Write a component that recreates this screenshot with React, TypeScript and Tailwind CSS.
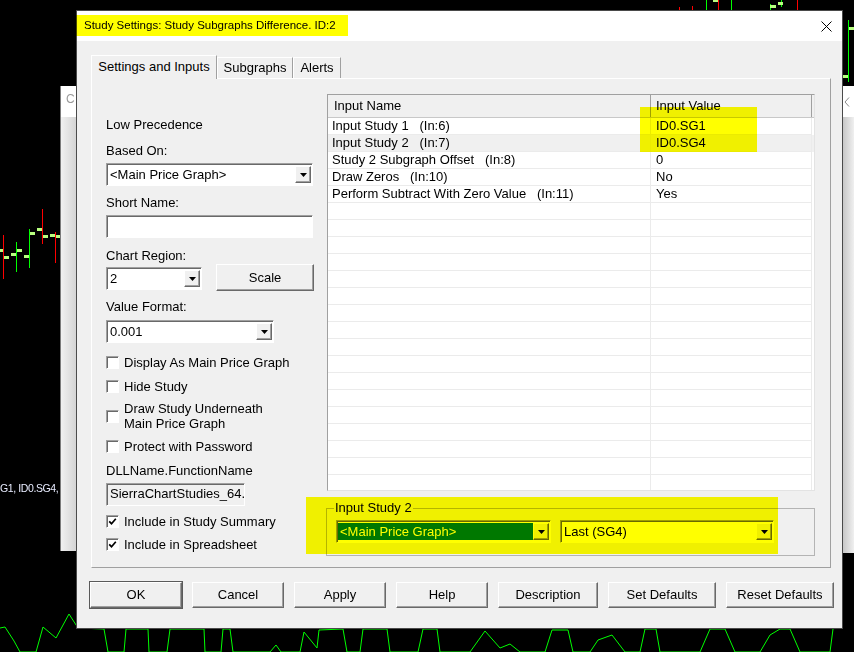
import React from 'react';

const inputs: [string, string][] = [
  ['Input Study 1   (In:6)', 'ID0.SG1'],
  ['Input Study 2   (In:7)', 'ID0.SG4'],
  ['Study 2 Subgraph Offset   (In:8)', '0'],
  ['Draw Zeros   (In:10)', 'No'],
  ['Perform Subtract With Zero Value   (In:11)', 'Yes'],
];

const emptyRows = Array.from({ length: 18 });

const raised =
  'border border-t-white border-l-white border-b-[#696969] border-r-[#696969] bg-[#f0f0f0] shadow-[inset_-1px_-1px_0_#a0a0a0]';
const sunken =
  'border border-t-[#a0a0a0] border-l-[#a0a0a0] border-b-white border-r-white shadow-[inset_1px_1px_0_#696969]';

function DropBtn() {
  return (
    <div className={`flex w-[16px] shrink-0 items-center justify-center ${raised}`}>
      <svg width="7" height="4" viewBox="0 0 7 4">
        <path d="M0 0h7L3.5 4z" fill="#000" />
      </svg>
    </div>
  );
}

function Combo({ value, className = '', selected = false }: { value: string; className?: string; selected?: boolean }) {
  return (
    <div className={`flex h-[23px] bg-white py-[2px] pr-[1px] ${sunken} ${className}`}>
      <div className="flex flex-1 items-stretch pl-[1px]">
        <div
          className={`flex-1 truncate pl-[2px] leading-[17px] ${selected ? 'bg-[#0078d7] text-white' : ''}`}
        >
          {value}
        </div>
      </div>
      <DropBtn />
    </div>
  );
}

function Check({ label, checked = false, className = '' }: { label: React.ReactNode; checked?: boolean; className?: string }) {
  return (
    <div className={`flex items-center gap-[5px] ${className}`}>
      <div className={`flex h-[13px] w-[13px] shrink-0 items-center justify-center bg-white ${sunken}`}>
        {checked && (
          <svg width="9" height="9" viewBox="0 0 9 9">
            <path d="M1.2 4.4 L3.5 6.7 L7.8 1.8" stroke="#000" strokeWidth="1.7" fill="none" />
          </svg>
        )}
      </div>
      <div className="leading-[15px]">{label}</div>
    </div>
  );
}

function Btn({ label, w, isDefault = false }: { label: string; w: string; isDefault?: boolean }) {
  return (
    <div
      className={`flex h-[26px] items-center justify-center ${w} ${raised} ${
        isDefault ? 'outline outline-1 outline-[#5a5a5a]' : ''
      }`}
    >
      {label}
    </div>
  );
}

function ChartBackground() {
  const bars: [number, number, number, string, number, number][] = [
    // x, top, bottom, colour, left tick y, right tick y
    [3, 235, 279, '#ff0000', 250, 257],
    [16, 242, 272, '#00ff00', 254, 250],
    [29, 229, 268, '#00ff00', 256, 233],
    [42, 209, 244, '#ff0000', 229, 236],
    [55, 232, 263, '#ff0000', 235, 236],
  ];
  const top: [number, number, number, string][] = [
    [679, 7, 10, '#ff0000'],
    [692, 6, 10, '#ff0000'],
    [706, 0, 10, '#00ff00'],
    [718, 0, 10, '#ff0000'],
    [731, 0, 10, '#00ff00'],
    [770, 4, 10, '#00ff00'],
    [781, 0, 7, '#00ff00'],
    [797, 0, 10, '#ff0000'],
    [848, 20, 82, '#00ff00'],
  ];
  return (
    <svg className="absolute inset-0" width="854" height="652" viewBox="0 0 854 652">
      {bars.map(([x, t, b, c, l, r], i) => (
        <g key={i}>
          <line x1={x + 0.5} y1={t} x2={x + 0.5} y2={b} stroke={c} strokeWidth="1" />
          <rect x={x - 5} y={l - 1} width="5" height="3" fill="#b8ff80" />
          <rect x={x + 1} y={r - 1} width="5" height="3" fill="#b8ff80" />
        </g>
      ))}
      {top.map(([x, t, b, c], i) => (
        <line key={i} x1={x + 0.5} y1={t} x2={x + 0.5} y2={b} stroke={c} strokeWidth="1" />
      ))}
      <rect x="713" y="0" width="5" height="2" fill="#b8ff80" />
      <rect x="770" y="5" width="6" height="3" fill="#b8ff80" />
      <rect x="778" y="2" width="5" height="3" fill="#b8ff80" />
      <rect x="849" y="27" width="5" height="3" fill="#b8ff80" />
      <rect x="843" y="75" width="5" height="3" fill="#b8ff80" />
      <polyline
        fill="none"
        stroke="#00ff00"
        strokeWidth="1"
        points="0,628 5,627 14,641 20,652 36,652 43,627 56,638 69,614 78,628 104,629 108,652 124,652 126,629 148,629 149,652 167,652 170,629 204,629 205,652 221,652 223,629 230,629 233,652 270,652 276,645 281,652 300,652 304,632 317,648 319,630 343,629 347,652 360,652 363,629 387,629 390,652 418,652 423,629 437,629 440,652 470,652 485,631 500,648 510,644 520,652 545,652 552,630 568,630 573,652 590,652 598,640 612,635 625,652 640,652 645,629 656,629 660,652 700,652 710,629 725,629 735,652 760,652 770,635 780,629 790,629 800,652 830,652 833,629"
      />
    </svg>
  );
}

export default function App() {
  return (
    <div className="relative h-[652px] w-[854px] overflow-hidden bg-black font-['Liberation_Sans',Arial,sans-serif] text-[13px] text-black">
      <ChartBackground />
      <div className="absolute left-0 top-[481px] whitespace-nowrap text-[10.5px] leading-[14px] tracking-[-0.4px] text-[#e8ecff]">
        G1, ID0.SG4,
      </div>

      {/* windows behind the dialog */}
      <div className="absolute left-[60px] top-[86px] flex h-[465px] w-[17px] flex-col border-l border-[#7a7a7a]">
        <div className="h-[31px] overflow-hidden bg-white pl-[5px] pt-[6px] text-[12px] leading-[14px] text-[#9a9a9a]">C</div>
        <div className="flex-1 bg-gradient-to-r from-[#f0f0f0] to-[#d2d2d2]" />
      </div>
      <div className="absolute left-[842px] top-[86px] flex h-[467px] w-[12px] flex-col">
        <div className="flex h-[31px] items-center bg-white pl-[2px]">
          <svg width="6" height="10" viewBox="0 0 6 10">
            <path d="M5 0.5 L1 5 L5 9.5" stroke="#8a8a8a" fill="none" />
          </svg>
        </div>
        <div className="flex-1 bg-gradient-to-r from-[#c4c4c4] to-[#f0f0f0]" />
      </div>

      {/* dialog */}
      <div className="absolute left-[76px] top-[10px] flex h-[619px] w-[767px] flex-col border border-[#4a4a4a] bg-[#f0f0f0]">
        <div className="flex h-[30px] items-center justify-between bg-white pl-[7px] pr-[10px]">
          <span className="text-[11.5px]">Study Settings: Study Subgraphs Difference. ID:2</span>
          <svg width="11" height="11" viewBox="0 0 11 11">
            <path d="M0.5 0.5 L10.5 10.5 M10.5 0.5 L0.5 10.5" stroke="#000" strokeWidth="1" />
          </svg>
        </div>

        <div className="flex flex-1 flex-col pl-[14px] pt-[14px]">
          {/* tabs */}
          <div className="flex h-[23px] items-end">
            <div className="relative z-10 -mb-px flex h-[24px] w-[126px] items-center justify-center border border-b-0 border-t-white border-l-white border-r-[#a0a0a0] bg-[#f0f0f0] pb-[2px]">
              Settings and Inputs
            </div>
            <div className="flex h-[21px] w-[76px] items-center justify-center border border-b-0 border-t-white border-l-white border-r-[#a0a0a0]">
              Subgraphs
            </div>
            <div className="flex h-[21px] w-[48px] items-center justify-center border border-b-0 border-t-white border-l-white border-r-[#a0a0a0]">
              Alerts
            </div>
          </div>

          {/* tab page */}
          <div className="flex h-[490px] w-[740px] gap-[13px] border border-t-white border-l-white border-b-[#a0a0a0] border-r-[#a0a0a0] pl-[14px] pt-[15px]">
            <div className="flex w-[208px] flex-col leading-[16px]">
              <div className="mt-[23px]">Low Precedence</div>
              <div className="mt-[10px]">Based On:</div>
              <Combo value="<Main Price Graph>" className="mt-[4px] w-[207px]" />
              <div className="mt-[9px]">Short Name:</div>
              <div className={`mt-[4px] h-[23px] w-[207px] bg-white ${sunken}`} />
              <div className="mt-[10px]">Chart Region:</div>
              <div className="flex items-end justify-between">
                <Combo value="2" className="mb-[1px] w-[96px]" />
                <div className={`flex h-[27px] w-[98px] items-center justify-center ${raised}`}>Scale</div>
              </div>
              <div className="mt-[8px]">Value Format:</div>
              <Combo value="0.001" className="mt-[5px] w-[168px]" />
              <Check label="Display As Main Price Graph" className="mt-[12px]" />
              <Check label="Hide Study" className="mt-[9px]" />
              <Check
                label={
                  <>
                    Draw Study Underneath
                    <br />
                    Main Price Graph
                  </>
                }
                className="mt-[7px]"
              />
              <Check label="Protect with Password" className="mt-[8px]" />
              <div className="mt-[9px]">DLLName.FunctionName</div>
              <div className={`mt-[4px] h-[23px] w-[139px] overflow-hidden whitespace-nowrap bg-[#f0f0f0] pl-[3px] leading-[19px] ${sunken}`}>
                SierraChartStudies_64.
              </div>
              <Check label="Include in Study Summary" checked className="mt-[8px]" />
              <Check label="Include in Spreadsheet" checked className="mt-[8px]" />
            </div>

            <div className="flex w-[488px] flex-col">
              {/* inputs list */}
              <div className="h-[397px] overflow-hidden border border-t-[#a0a0a0] border-l-[#a0a0a0] border-b-[#e3e3e3] border-r-[#e3e3e3] bg-white">
                <div className="flex h-[23px] border-b border-[#c8c8c8] bg-[#f0f0f0] leading-[22px]">
                  <div className="w-[323px] border-r border-[#a0a0a0] pl-[6px]">Input Name</div>
                  <div className="w-[161px] border-r border-[#a0a0a0] pl-[5px]">Input Value</div>
                </div>
                {inputs.map(([name, value], i) => (
                  <div key={name} className={`flex h-[17px] leading-[16px] ${i === 1 ? 'bg-[#f0f0f0]' : ''}`}>
                    <div className="w-[323px] whitespace-pre border-b border-r border-[#ebebeb] pl-[4px]">{name}</div>
                    <div className="w-[161px] border-b border-r border-[#ebebeb] pl-[5px]">{value}</div>
                  </div>
                ))}
                {emptyRows.map((_, i) => (
                  <div key={i} className="flex h-[17px]">
                    <div className="w-[323px] border-b border-r border-[#ebebeb]" />
                    <div className="w-[161px] border-b border-r border-[#ebebeb]" />
                  </div>
                ))}
              </div>

              {/* Input Study 2 group */}
              <fieldset className="-ml-px mt-[9px] h-[56px] w-[489px] border border-[#b4b4b4]">
                <legend className="ml-[7px] px-[1px] leading-[16px]">Input Study 2</legend>
                <div className="mt-[4px] flex gap-[9px] pl-[9px]">
                  <Combo value="<Main Price Graph>" selected className="w-[215px]" />
                  <Combo value="Last (SG4)" className="w-[214px]" />
                </div>
              </fieldset>
            </div>
          </div>

          {/* buttons */}
          <div className="-ml-px mt-[14px] flex gap-[10px]">
            <Btn label="OK" w="w-[92px]" isDefault />
            <Btn label="Cancel" w="w-[92px]" />
            <Btn label="Apply" w="w-[92px]" />
            <Btn label="Help" w="w-[92px]" />
            <Btn label="Description" w="w-[100px]" />
            <Btn label="Set Defaults" w="w-[108px]" />
            <Btn label="Reset Defaults" w="w-[108px]" />
          </div>
        </div>
      </div>

      {/* highlighter marks */}
      <div className="absolute left-[76px] top-[15px] h-[21px] w-[272px] bg-[#ffff00] mix-blend-multiply" />
      <div className="absolute left-[640px] top-[107px] h-[45px] w-[117px] bg-[#ffff00] mix-blend-multiply" />
      <div className="absolute left-[306px] top-[497px] h-[57px] w-[472px] bg-[#ffff00] mix-blend-multiply" />
    </div>
  );
}
